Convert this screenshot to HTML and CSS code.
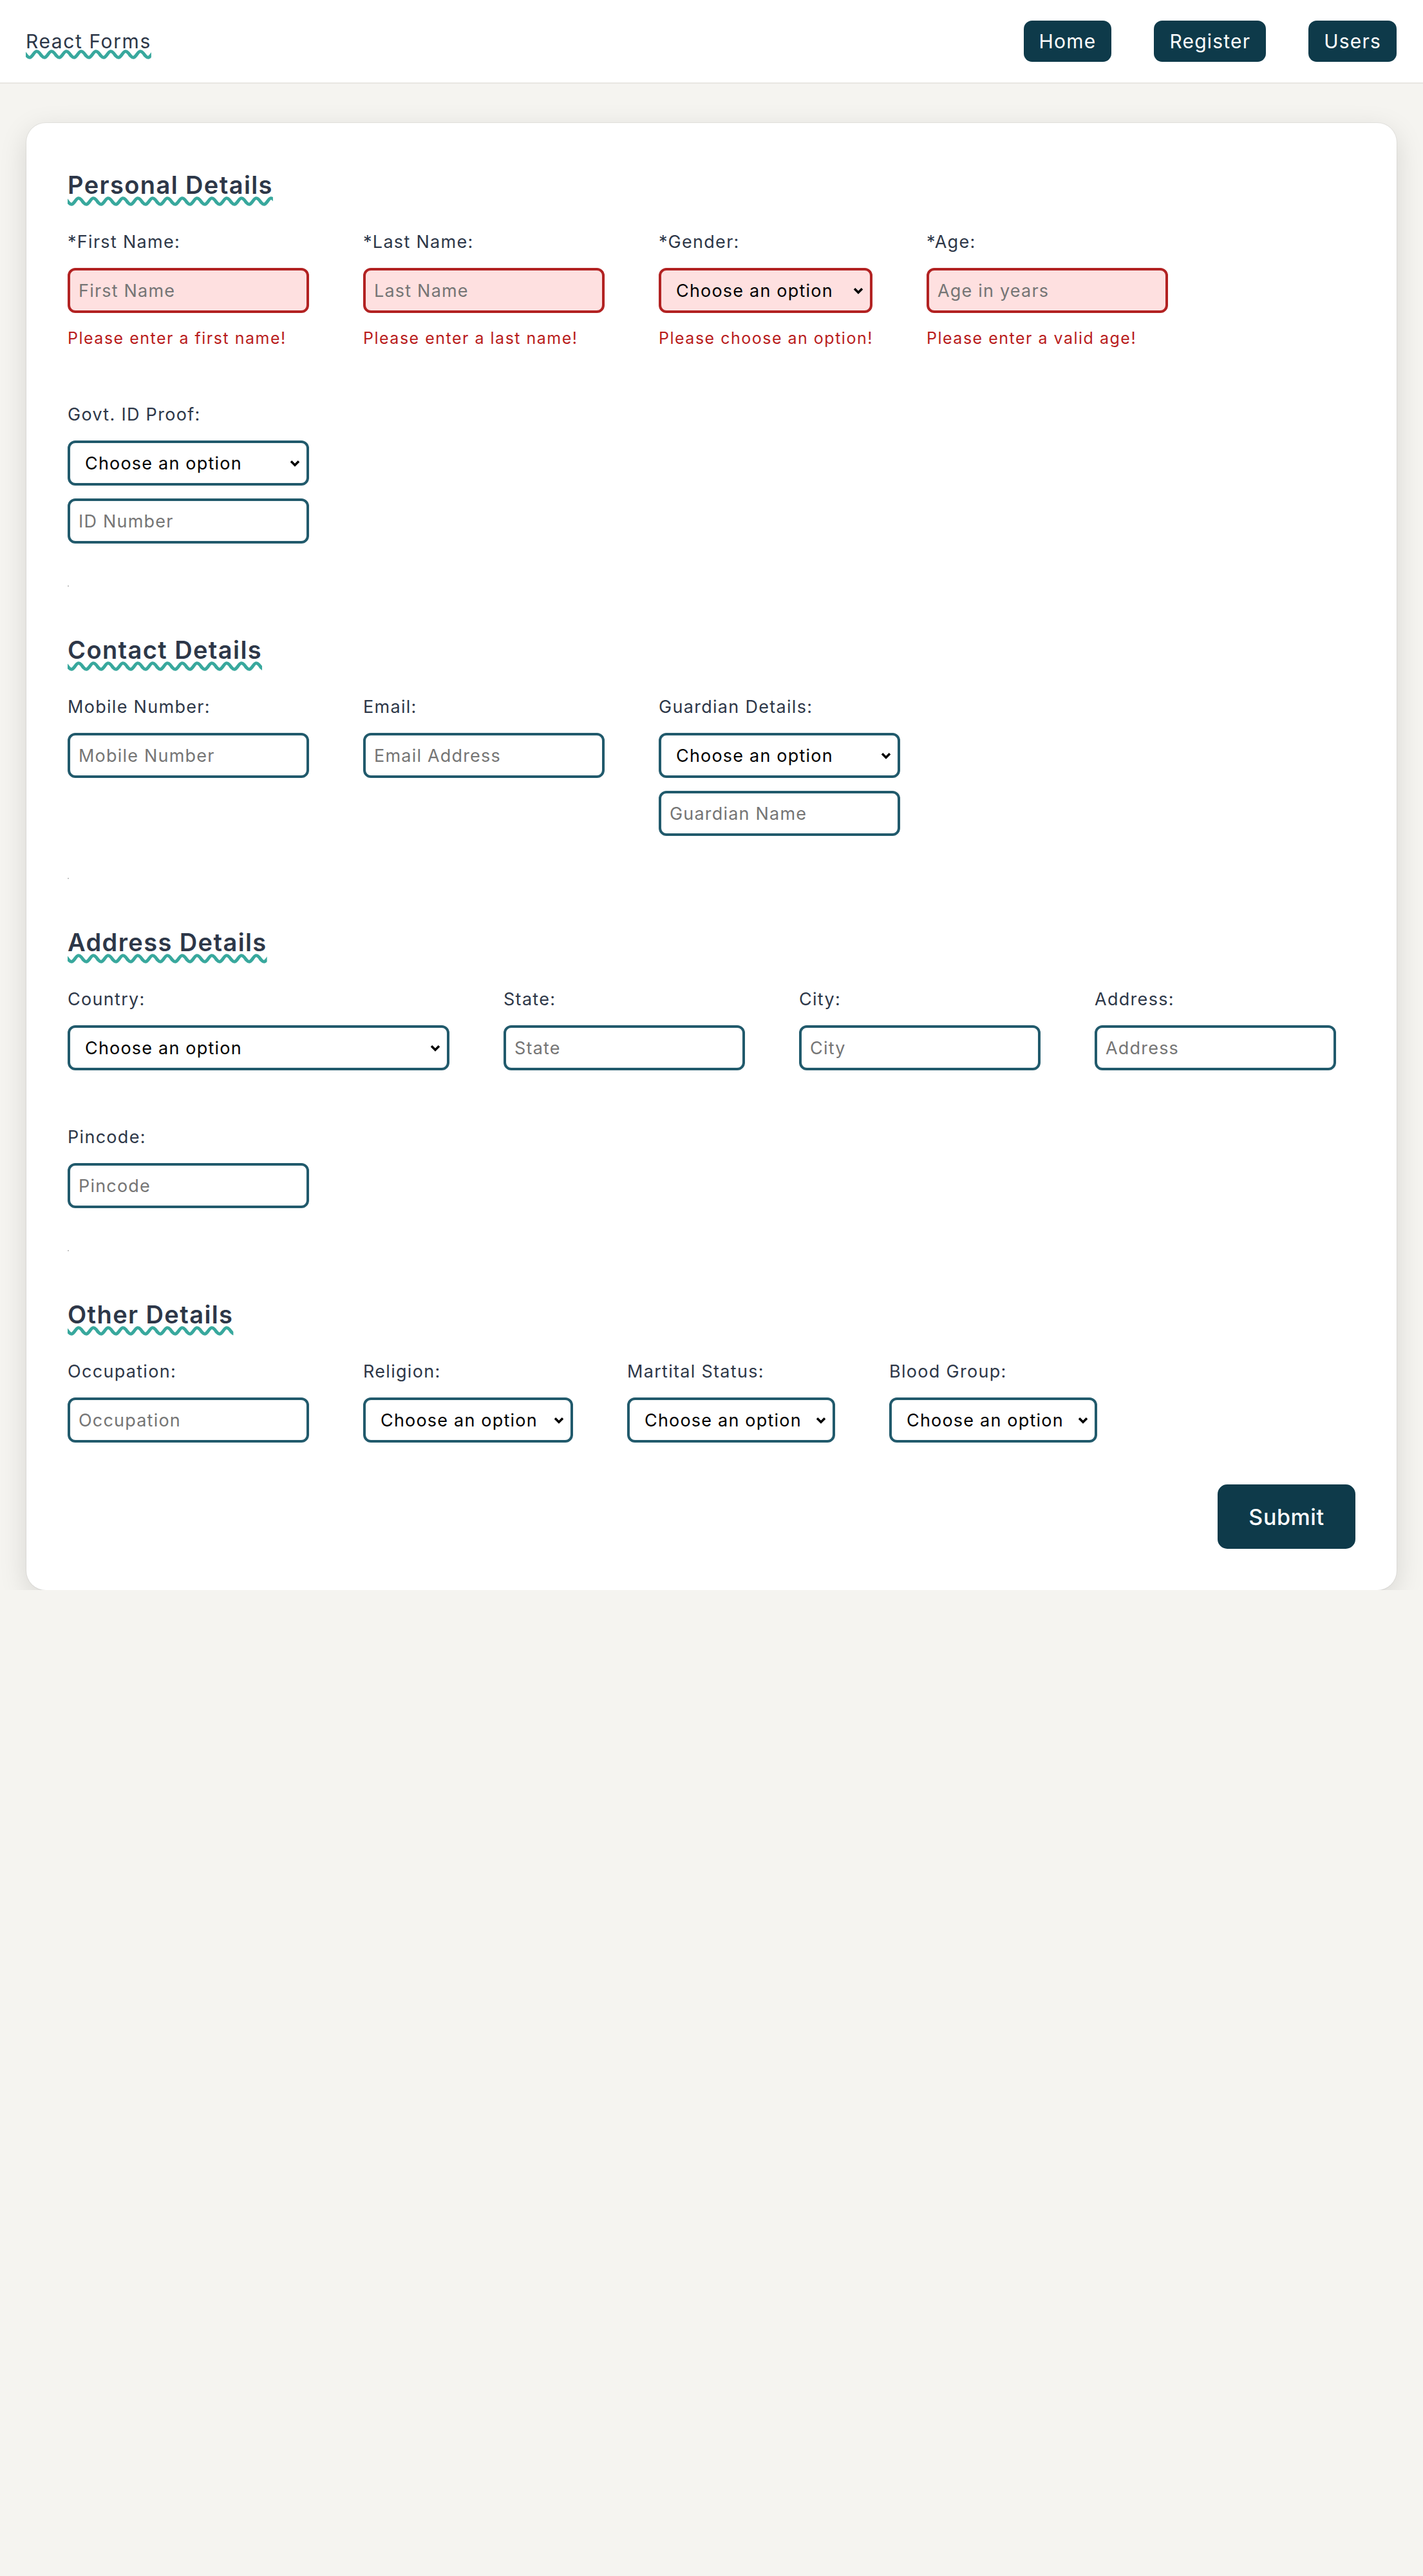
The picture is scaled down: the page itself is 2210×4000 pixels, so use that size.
FILE: index.html
```html
<!DOCTYPE html>
<html lang="en">
<head>
<meta charset="utf-8">
<title>React Forms</title>
<link rel="stylesheet" href="styles.css">
</head>
<body>
<header class="topbar">
  <a class="logo">React Forms</a>
  <nav class="nav">
    <a class="nav-btn">Home</a>
    <a class="nav-btn">Register</a>
    <a class="nav-btn">Users</a>
  </nav>
</header>

<main class="card">
  <form>
    <section class="section">
      <h2 class="section-title">Personal Details</h2>
      <div class="fields">
        <div class="field err-field">
          <label>*First Name:</label>
          <input class="input" type="text" placeholder="First Name">
          <div class="error">Please enter a first name!</div>
        </div>
        <div class="field err-field">
          <label>*Last Name:</label>
          <input class="input" type="text" placeholder="Last Name">
          <div class="error">Please enter a last name!</div>
        </div>
        <div class="field err-field">
          <label>*Gender:</label>
          <select class="input sel w-gender"><option>Choose an option</option></select>
          <div class="error">Please choose an option!</div>
        </div>
        <div class="field err-field">
          <label>*Age:</label>
          <input class="input" type="text" placeholder="Age in years">
          <div class="error">Please enter a valid age!</div>
        </div>
        <div class="field">
          <label>Govt. ID Proof:</label>
          <select class="input sel w-full"><option>Choose an option</option></select>
          <input class="input" type="text" placeholder="ID Number">
        </div>
      </div>
      <hr class="sep">
    </section>

    <section class="section">
      <h2 class="section-title">Contact Details</h2>
      <div class="fields">
        <div class="field">
          <label>Mobile Number:</label>
          <input class="input" type="text" placeholder="Mobile Number">
        </div>
        <div class="field">
          <label>Email:</label>
          <input class="input" type="text" placeholder="Email Address">
        </div>
        <div class="field">
          <label>Guardian Details:</label>
          <select class="input sel w-full"><option>Choose an option</option></select>
          <input class="input" type="text" placeholder="Guardian Name">
        </div>
      </div>
      <hr class="sep">
    </section>

    <section class="section">
      <h2 class="section-title">Address Details</h2>
      <div class="fields">
        <div class="field">
          <label>Country:</label>
          <select class="input sel w-country"><option>Choose an option</option></select>
        </div>
        <div class="field">
          <label>State:</label>
          <input class="input" type="text" placeholder="State">
        </div>
        <div class="field">
          <label>City:</label>
          <input class="input" type="text" placeholder="City">
        </div>
        <div class="field">
          <label>Address:</label>
          <input class="input" type="text" placeholder="Address">
        </div>
        <div class="field">
          <label>Pincode:</label>
          <input class="input" type="text" placeholder="Pincode">
        </div>
      </div>
      <hr class="sep">
    </section>

    <section class="section">
      <h2 class="section-title">Other Details</h2>
      <div class="fields">
        <div class="field">
          <label>Occupation:</label>
          <input class="input" type="text" placeholder="Occupation">
        </div>
        <div class="field">
          <label>Religion:</label>
          <select class="input sel w-religion"><option>Choose an option</option></select>
        </div>
        <div class="field">
          <label>Martital Status:</label>
          <select class="input sel w-marital"><option>Choose an option</option></select>
        </div>
        <div class="field">
          <label>Blood Group:</label>
          <select class="input sel w-blood"><option>Choose an option</option></select>
        </div>
      </div>
    </section>

    <div class="actions">
      <button class="submit" type="button">Submit</button>
    </div>
  </form>
</main>
</body>
</html>
```

FILE: styles.css
```css
* {
  box-sizing: border-box;
}

body {
  margin: 0;
  background: #f5f4f0;
  font-family: Inter, "Open Sans", sans-serif;
  color: #2d3748;
}

.topbar {
  height: 130px;
  background: #ffffff;
  border-bottom: 2px solid #e8e6e1;
  display: flex;
  align-items: center;
  justify-content: space-between;
  padding: 0 41px 0 40px;
}

.logo {
  font-size: 30px;
  letter-spacing: 1.6px;
  color: #2d3748;
  text-decoration: underline wavy #38a89d;
  text-decoration-thickness: 4.5px;
  text-underline-offset: 3px;
}

.nav {
  display: flex;
  gap: 66px;
}

.nav-btn {
  height: 64px;
  padding: 0 24px;
  display: flex;
  align-items: center;
  background: #0e3a4a;
  color: #ffffff;
  border-radius: 13px;
  font-size: 30px;
  letter-spacing: 1.2px;
}

.card {
  margin: 61px 41px 0;
  background: #ffffff;
  border-radius: 30px;
  padding: 73px 64px 64px;
  box-shadow: 0 0 0 1px rgba(0, 0, 0, 0.05), 0 12px 44px rgba(0, 0, 0, 0.13);
}

.section-title {
  margin: 0;
  font-size: 38px;
  font-weight: 600;
  line-height: 46px;
  letter-spacing: 1.4px;
  color: #2d3748;
  text-decoration: underline wavy #38a89d;
  text-decoration-thickness: 4.5px;
  text-underline-offset: 5px;
}

.fields {
  display: flex;
  flex-wrap: wrap;
  column-gap: 84px;
  row-gap: 88px;
  margin-top: 50px;
}

.field {
  display: flex;
  flex-direction: column;
  align-items: flex-start;
}

.field label {
  font-size: 27px;
  line-height: 32px;
  letter-spacing: 1.3px;
  margin-bottom: 24px;
  color: #2d3748;
}

.input {
  width: 375px;
  height: 70px;
  border: 4px solid #215a6c;
  border-radius: 12px;
  font-family: inherit;
  font-size: 27px;
  letter-spacing: 1.2px;
  padding: 0 13px;
  background: #ffffff;
  color: #2d3748;
  outline: none;
}

.input::placeholder {
  color: #757575;
}

.input + .input {
  margin-top: 20px;
}

.sel {
  appearance: none;
  -webkit-appearance: none;
  color: #000000;
  padding: 0 34px 0 23px;
  background-image: url("data:image/svg+xml;utf8,<svg xmlns='http://www.w3.org/2000/svg' width='16' height='11' viewBox='0 0 16 11'><path d='M2 2.2l6 6 6-6' fill='none' stroke='black' stroke-width='3.6'/></svg>");
  background-repeat: no-repeat;
  background-position: right 10px center;
  background-size: 16px 11px;
}

.w-full { width: 375px; }
.w-gender { width: 332px; }
.w-country { width: 593px; }
.w-religion { width: 326px; }
.w-marital { width: 323px; }
.w-blood { width: 323px; }

.err-field .input {
  border-color: #b22222;
  background-color: #fee0e0;
}

.error {
  color: #b91c1c;
  font-size: 25px;
  line-height: 30px;
  letter-spacing: 1.5px;
  margin-top: 24px;
  width: 0;
  white-space: nowrap;
}

.sep {
  width: 0;
  height: 0;
  margin: 65px 0 75px;
  border: 1px solid #c4c4c4;
}

.actions {
  display: flex;
  justify-content: flex-end;
  margin-top: 65px;
}

.submit {
  width: 214px;
  height: 100px;
  border: 0;
  border-radius: 15px;
  background: #0e3a4a;
  color: #ffffff;
  font-family: inherit;
  font-size: 34px;
  font-weight: 500;
  letter-spacing: 0.6px;
}
```
